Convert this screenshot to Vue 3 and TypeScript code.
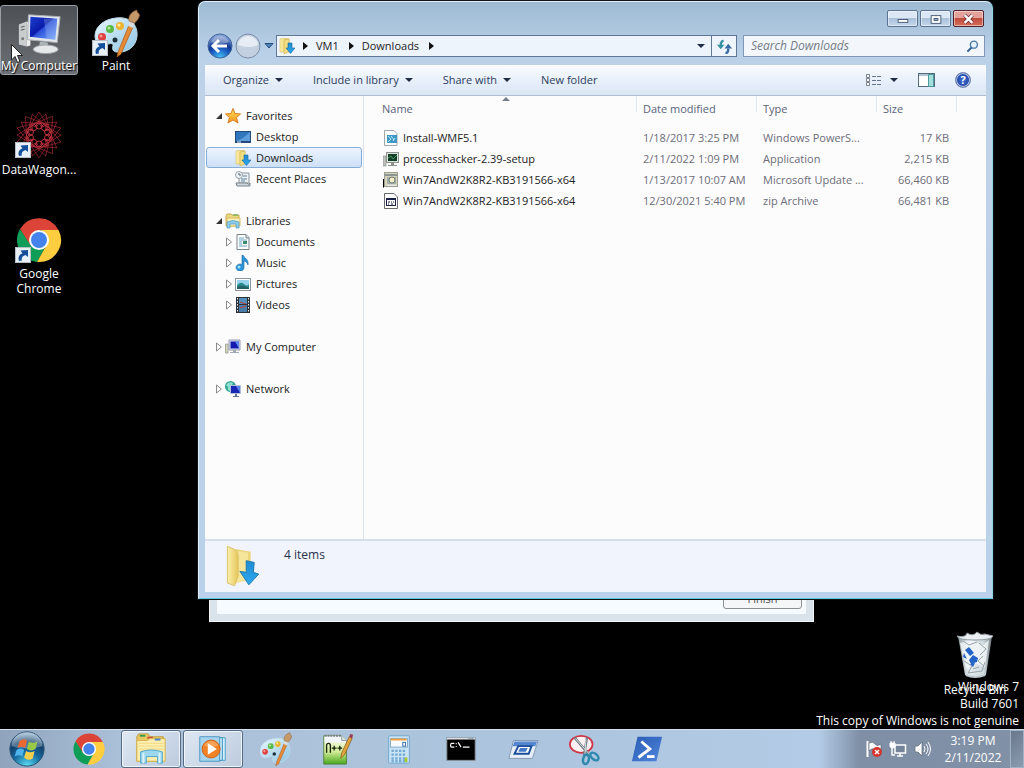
<script setup lang="ts">
import { ref } from 'vue'

interface NavItem {
  label: string
  icon: string
  level: 1 | 2
  arrow: 'open' | 'closed' | 'none'
  selected?: boolean
}

interface FileRow {
  name: string
  icon: string
  modified: string
  type: string
  size: string
}

const navGroups: NavItem[][] = [
  [
    { label: 'Favorites', icon: 'star', level: 1, arrow: 'open' },
    { label: 'Desktop', icon: 'desk', level: 2, arrow: 'none' },
    { label: 'Downloads', icon: 'downloads', level: 2, arrow: 'none', selected: true },
    { label: 'Recent Places', icon: 'recent', level: 2, arrow: 'none' },
  ],
  [
    { label: 'Libraries', icon: 'libraries', level: 1, arrow: 'open' },
    { label: 'Documents', icon: 'document', level: 2, arrow: 'closed' },
    { label: 'Music', icon: 'music', level: 2, arrow: 'closed' },
    { label: 'Pictures', icon: 'picture', level: 2, arrow: 'closed' },
    { label: 'Videos', icon: 'video', level: 2, arrow: 'closed' },
  ],
  [{ label: 'My Computer', icon: 'pc-small', level: 1, arrow: 'closed' }],
  [{ label: 'Network', icon: 'network', level: 1, arrow: 'closed' }],
]

const files: FileRow[] = [
  { name: 'Install-WMF5.1', icon: 'ps-file', modified: '1/18/2017 3:25 PM', type: 'Windows PowerS...', size: '17 KB' },
  { name: 'processhacker-2.39-setup', icon: 'setup', modified: '2/11/2022 1:09 PM', type: 'Application', size: '2,215 KB' },
  { name: 'Win7AndW2K8R2-KB3191566-x64', icon: 'msu', modified: '1/13/2017 10:07 AM', type: 'Microsoft Update ...', size: '66,460 KB' },
  { name: 'Win7AndW2K8R2-KB3191566-x64', icon: 'zip', modified: '12/30/2021 5:40 PM', type: 'zip Archive', size: '66,481 KB' },
]

const tasks = [
  { label: 'Google Chrome', icon: 'chrome' },
  { label: 'Windows Explorer', icon: 'explorer', open: true },
  { label: 'Windows Media Player', icon: 'media', open: true },
  { label: 'Paint', icon: 'palette' },
  { label: 'Notepad++', icon: 'notepad' },
  { label: 'Calculator', icon: 'calc' },
  { label: 'Command Prompt', icon: 'cmd' },
  { label: 'Run', icon: 'run' },
  { label: 'Snipping Tool', icon: 'snip' },
  { label: 'PowerShell', icon: 'powershell' },
]

const menus = ['Organize', 'Include in library', 'Share with']
const query = ref('')
</script>

<template>
  <div class="desktop">
    <svg class="defs" aria-hidden="true">
      <defs>
        <linearGradient id="g-screen" x1="0" y1="0" x2="1" y2="1">
          <stop offset="0" stop-color="#1c3fd0" /><stop offset=".45" stop-color="#0a1aa8" />
          <stop offset=".5" stop-color="#2c50dc" /><stop offset="1" stop-color="#7fb0f8" />
        </linearGradient>
        <linearGradient id="g-folder" x1="0" y1="0" x2="1" y2="0">
          <stop offset="0" stop-color="#fbf1ac" /><stop offset="1" stop-color="#e6c65a" />
        </linearGradient>
        <linearGradient id="g-arrow" x1="0" y1="0" x2="0" y2="1">
          <stop offset="0" stop-color="#1d8bd2" /><stop offset="1" stop-color="#2fa8f0" />
        </linearGradient>
        <linearGradient id="g-palette" x1="0" y1="0" x2="1" y2="1">
          <stop offset="0" stop-color="#eaf8ff" /><stop offset="1" stop-color="#8cc4e4" />
        </linearGradient>
        <linearGradient id="g-star" x1="0" y1="0" x2="0" y2="1">
          <stop offset="0" stop-color="#ffe45c" /><stop offset="1" stop-color="#f7941e" />
        </linearGradient>
        <linearGradient id="g-green" x1="0" y1="0" x2="0" y2="1">
          <stop offset="0" stop-color="#fbfdf4" /><stop offset=".55" stop-color="#d5ee9c" /><stop offset="1" stop-color="#49a81c" />
        </linearGradient>
        <linearGradient id="g-ps" x1="0" y1="0" x2="1" y2="1">
          <stop offset="0" stop-color="#2a5bb4" /><stop offset="1" stop-color="#4f86dc" />
        </linearGradient>
        <radialGradient id="g-orb" cx=".5" cy="1" r=".95">
          <stop offset="0" stop-color="#5ce0f4" /><stop offset=".45" stop-color="#16699e" />
          <stop offset=".75" stop-color="#123e68" /><stop offset="1" stop-color="#8fb0c8" />
        </radialGradient>
        <radialGradient id="g-back" cx=".5" cy="1" r="1">
          <stop offset="0" stop-color="#48c8f8" /><stop offset=".4" stop-color="#1a5cc0" />
          <stop offset=".6" stop-color="#123a94" /><stop offset="1" stop-color="#9cb8e4" />
        </radialGradient>
        <linearGradient id="g-bin" x1="0" y1="0" x2="1" y2="0">
          <stop offset="0" stop-color="#8c979c" /><stop offset=".3" stop-color="#e6edf0" />
          <stop offset=".75" stop-color="#cfd9de" /><stop offset="1" stop-color="#6f797e" />
        </linearGradient>
      </defs>

      <symbol id="i-shortcut" viewBox="0 0 16 16">
        <rect x=".5" y=".5" width="15" height="15" fill="#e9eff6" stroke="#b8bec6" />
        <path d="M4 14C2.500 9.500 5 7 7.500 6.500L5.500 3.500L13 3L13 10L10.500 8C7.500 9 6 11 7 13.500Z" fill="#154f9c" />
      </symbol>

      <symbol id="i-pc" viewBox="0 0 48 48">
        <path d="M3 15L11 12V38L3 36Z" fill="#c9cdce" /><path d="M11 12L15 13V37L11 38Z" fill="#eef0f0" />
        <path d="M5 18L9 17M5 21L9 20" stroke="#53585b" /><circle cx="7" cy="30" r="1.500" fill="#72787b" />
        <path d="M13 5L46 7L43 34L12 31Z" fill="#e3e7ea" stroke="#a8b0b5" />
        <path d="M15 7L43 9L41 31L14.500 28Z" fill="url(#g-screen)" />
        <path d="M29 9L43 9L41 31L32 30Z" fill="#a8c7fa" opacity=".3" />
        <path d="M25 33L33 34L34 39L24 38Z" fill="#aeb6ba" />
        <ellipse cx="31" cy="41" rx="13" ry="4.500" fill="#e4e8ea" stroke="#9aa1a5" />
      </symbol>

      <symbol id="i-palette" viewBox="0 0 48 48">
        <path d="M24 9C38 7 46 16 45 27C44 38 35 44 25 43C21 43 20 40 21 37C22 34 18 34 14 36C8 38 3 34 3 27C3 17 13 10 24 9Z" fill="url(#g-palette)" stroke="#bcdcea" />
        <circle cx="10" cy="28" r="4" fill="#df4141" /><circle cx="9" cy="27" r="1.500" fill="#ff9c8e" />
        <circle cx="18" cy="20" r="4" fill="#5cb948" /><circle cx="17" cy="19" r="1.500" fill="#b1ec90" />
        <circle cx="28" cy="17" r="4" fill="#edb432" /><circle cx="27" cy="16" r="1.500" fill="#fff09b" />
        <circle cx="23" cy="31" r="2.500" fill="#20303a" />
        <path d="M37 16L41 18L29 45L25 48L26 43Z" fill="#e68a35" stroke="#a65a1e" stroke-width=".7" />
        <path d="M36 17L38 11L43 13L41 19Z" fill="#d9dde0" />
        <path d="M37 12C36 7 39 3 45 1C44 4 49 4 47 8C46 11 44 13 42 14Z" fill="#c59869" stroke="#8b623d" stroke-width=".7" />
      </symbol>

      <symbol id="i-chrome" viewBox="0 0 48 48">
        <path d="M24 14H43.500A22 22 0 0 0 5 13L15 30Z" fill="#db4437" />
        <path d="M5 13L15.300 29L24 34L31 30L22 46A22 22 0 0 1 5 13Z" fill="#109d58" />
        <path d="M31 30L22 46A22 22 0 0 0 43.500 14H24A10 10 0 0 1 31 30Z" fill="#ffcd40" />
        <circle cx="24" cy="24" r="10" fill="#fff" /><circle cx="24" cy="24" r="8" fill="#4583ec" />
      </symbol>

      <symbol id="i-wagon" viewBox="0 0 48 48">
        <g fill="none" stroke="#b32c38" stroke-width=".8">
          <g v-for="n in 10" :key="n" :transform="`rotate(${n * 36} 24 24)`">
            <path d="M24 1L11 21M24 1L37 21M17 3L31 15M31 3L17 15" opacity=".75" />
            <circle cx="24" cy="15" r="3" stroke="#d63b48" /><path d="M21 17L24 12L27 17" />
          </g>
        </g>
        <circle cx="24" cy="24" r="4" fill="#000" />
      </symbol>

      <symbol id="i-downloads" viewBox="0 0 16 16">
        <path d="M1 1L6 0L10 1V13L5 14L1 14Z" fill="url(#g-folder)" stroke="#d3b24e" stroke-width=".5" />
        <path d="M5 2L10 1V14L5 16Z" fill="#f2dc82" stroke="#c9a848" stroke-width=".5" />
        <path d="M9 5H13V10H16L11.500 15.500L7 10H9Z" fill="url(#g-arrow)" stroke="#16689c" stroke-width=".6" />
      </symbol>

      <symbol id="i-bigfolder" viewBox="0 0 48 48">
        <path d="M15 5L32 8V39L15 43Z" fill="#edd479" /><path d="M12 7L29 9V38L14 44Z" fill="#f6e69b" />
        <path d="M6 2L15 6Q18 8 18 12V35L14 46L6 43Z" fill="url(#g-folder)" stroke="#d9bd64" />
        <path d="M27 18L36 20L35 31L41 33L30 45L20 30L27 31Z" fill="url(#g-arrow)" stroke="#1975ab" />
      </symbol>

      <symbol id="i-star" viewBox="0 0 16 16">
        <path d="M8 .5L10 5.500L15.500 6L11.500 9.500L13 15L8 12L3 15L4.500 9.500L.5 6L6 5.500Z" fill="url(#g-star)" stroke="#dc7c20" />
      </symbol>
      <symbol id="i-desk" viewBox="0 0 16 16">
        <rect x="0" y="2" width="16" height="12" fill="#234c7e" /><rect x="1" y="3" width="14" height="9" fill="#3175bd" />
        <path d="M1 12Q8 10 15 3V12Z" fill="#5c9cdb" /><path d="M2 13H6" stroke="#dcecff" />
      </symbol>
      <symbol id="i-recent" viewBox="0 0 16 16">
        <path d="M4 2H14V12H4Z" fill="#eef2f5" stroke="#8b969e" /><path d="M1 12H12Q14 15 15 12V15H2Z" fill="#cfd6dc" stroke="#7c858c" />
        <path d="M8 5H12M6 8H12M6 10H10" stroke="#5d80a0" /><circle cx="4" cy="4" r="3.500" fill="#edf4f7" stroke="#96a2aa" /><path d="M4 2V4H6" fill="none" stroke="#59656f" />
      </symbol>
      <symbol id="i-libraries" viewBox="0 0 16 16">
        <path d="M1 3L2 1H6L7 2H14V13H1Z" fill="#ecd780" stroke="#c9ad4f" /><path d="M2 5H15V13H2Z" fill="#f9efb8" stroke="#d5bb62" />
        <path d="M8 2H13" stroke="#52a650" /><path d="M2 15V9Q8 6 14 9V15H11V11H5V15Z" fill="#8dcdec" stroke="#529cc3" stroke-width=".7" />
      </symbol>
      <symbol id="i-document" viewBox="0 0 16 16">
        <path d="M2 .5H11L14 3.500V15.500H2Z" fill="#fff" stroke="#79838c" /><path d="M11 .5V4H14" fill="#dfe5e9" stroke="#79838c" />
        <path d="M4 4H9M4 6H12M4 8H7M4 10H7M4 12H12" stroke="#69a2c4" /><path d="M8 7H12V10H8Z" fill="#378c6c" />
      </symbol>
      <symbol id="i-music" viewBox="0 0 16 16">
        <path d="M8 0C9 3 14 4 13 10C12 7 10 6 9 6V12A4 3.500 0 1 1 7 9.500V0Z" fill="#2b93d8" stroke="#1a6aa6" stroke-width=".6" /><circle cx="4" cy="12" r="1.500" fill="#9ee2ff" />
      </symbol>
      <symbol id="i-picture" viewBox="0 0 16 16">
        <rect x=".5" y="2.500" width="15" height="12" fill="#fff" stroke="#8b979d" /><rect x="2" y="4" width="12" height="9" fill="#98d4ed" />
        <path d="M2 9Q6 5 9 8T14 8V13H2Z" fill="#2b8c8e" /><path d="M2 11Q8 8 14 12V13H2Z" fill="#27616a" />
      </symbol>
      <symbol id="i-video" viewBox="0 0 16 16">
        <rect x="1" y="0" width="14" height="16" fill="#2a3138" /><rect x="4" y="1" width="8" height="6" fill="#538fbb" /><rect x="4" y="8" width="8" height="7" fill="#4a7ea8" />
        <path d="M2.500 1V16M13.500 1V16" stroke="#e7edf1" stroke-dasharray="1.500 1.500" /><path d="M5 5L11 7M5 11L11 9" stroke="#b94042" />
      </symbol>
      <symbol id="i-pc-small" viewBox="0 0 16 16">
        <path d="M.5 5H3V14H.5Z" fill="#d8dabf" stroke="#8b8f87" stroke-width=".7" /><path d="M4 1H15V11H4Z" fill="#dde2ef" stroke="#929bb2" /><path d="M5.500 2.500H14V9.500H5.500Z" fill="#151ab0" /><path d="M10 2.500H14V9.500Z" fill="#5e8bee" /><path d="M8 11H11V13H14V14H5V13H8Z" fill="#a5abb2" />
      </symbol>
      <symbol id="i-network" viewBox="0 0 16 16">
        <circle cx="5.500" cy="5.500" r="5.500" fill="#38a894" /><path d="M1 4Q4 0 8 2L6 5L9 8L4 10Q2 8 3 6Z" fill="#8be0d0" />
        <path d="M5.500 4.500H15.500V12.500H5.500Z" fill="#1a27b2" stroke="#b3bfda" /><path d="M11 5L15 5V12Z" fill="#5b83e6" /><path d="M10 13H12V15H14V16H8V15H10Z" fill="#68758f" />
      </symbol>

      <symbol id="i-ps-file" viewBox="0 0 16 16">
        <path d="M1.500 .5H11L14 3.500V15.500H1.500Z" fill="#fff" stroke="#a0a7ac" /><path d="M4 5H14V13H4Z" fill="#3f97c6" /><path d="M5 6L8 9L5 12M10 11L12 8M8 6L11 10" fill="none" stroke="#bfe6fa" />
      </symbol>
      <symbol id="i-setup" viewBox="0 0 16 16">
        <path d="M0 5H3V15H0Z" fill="#bfc4be" stroke="#80867f" stroke-width=".6" /><rect x="3.500" y="1.500" width="12" height="10" fill="#dce2dc" stroke="#8b938c" /><rect x="5" y="3" width="9" height="7" fill="#163f2b" /><path d="M5 7L8 5L10 8L14 4" fill="none" stroke="#3c9a63" /><path d="M8 12H11V14H14V15H5V14H8Z" fill="#8a928b" />
      </symbol>
      <symbol id="i-msu" viewBox="0 0 16 16">
        <rect x="1.500" y=".5" width="13" height="14" fill="#d6d4b9" stroke="#9c9c90" /><path d="M2 3H14" stroke="#8b9490" stroke-width="2" /><rect x="4" y="5" width="9" height="8" fill="#a3aea9" /><circle cx="9" cy="8" r="3" fill="#f2efc6" stroke="#6f7a76" /><path d="M4 13H13" stroke="#fff" /><path d="M.5 7V15.500" fill="none" stroke="#000" />
      </symbol>
      <symbol id="i-zip" viewBox="0 0 16 16">
        <path d="M1.500 .5H11L14.500 4V15.500H1.500Z" fill="#fff" stroke="#6b6b6b" /><rect x="3" y="5" width="10" height="8" fill="#191e47" /><rect x="4" y="7" width="8" height="5" fill="#fff" /><path d="M5 9H7M8 9H9M10 9H11M5 11H6M8 11H10" stroke="#191e47" />
      </symbol>

      <symbol id="i-explorer" viewBox="0 0 36 36">
        <path d="M3 5L5 2H15L17 5H31V31H3Z" fill="#e7c864" stroke="#c19d3c" /><path d="M6 4H12" stroke="#399a48" stroke-width="2" /><path d="M14 6H20" stroke="#cf4d38" stroke-width="2" />
        <path d="M3 9H14L17 7H33V31H3Z" fill="#fbeeae" stroke="#d3b04b" /><path d="M5 12H32M5 15H32M5 18H32" stroke="#f1da84" />
        <path d="M22 8H28" stroke="#4684c9" stroke-width="2" />
        <path d="M7 33V21Q18 17 30 21V33H25V26H13V33Z" fill="#9bd8f0" stroke="#4fa3ca" /><path d="M10 22V33M27 22V33" stroke="#def4fc" stroke-width="2" />
      </symbol>
      <symbol id="i-media" viewBox="0 0 36 36">
        <path d="M10 6H31V30H10Z" fill="#d3effb" stroke="#4a9cc9" /><path d="M7 6H28V30H7Z" fill="#bce4f7" stroke="#3f94c5" /><path d="M4 5H25V31H4Z" fill="#a5d4ef" stroke="#4a95c2" />
        <circle cx="16" cy="18" r="9.500" fill="#f18326" stroke="#ce5f18" /><path d="M8 14Q16 5 24 14L16 17Z" fill="#f9b778" opacity=".6" /><path d="M12.500 12L22 18L12.500 24Z" fill="#fff" />
      </symbol>
      <symbol id="i-notepad" viewBox="0 0 36 36">
        <path d="M4 4H23L28 9V34H4Z" fill="url(#g-green)" stroke="#54823b" /><path d="M5 4H23L28 9V11H5Z" fill="#f3f6f8" /><path d="M5 4H23" stroke="#747c82" stroke-width="2" stroke-dasharray="2 1" /><path d="M23 4V9H28" fill="#dde3e6" stroke="#919a9f" />
        <path d="M7 22V14Q7 12 9 12T11 14V22M12.500 17H17.500M15 14.500V19.500M18.500 17H23.500M21 14.500V19.500" fill="none" stroke="#16230e" stroke-width="1.400" />
        <path d="M31 5L34 7L26 24L22 28L23 22Z" fill="#e2a33f" stroke="#87601f" stroke-width=".8" /><path d="M31 5L32 2L35 3L34 7Z" fill="#9b3850" />
      </symbol>
      <symbol id="i-calc" viewBox="0 0 36 36">
        <rect x="7" y="4" width="22" height="29" rx="1" fill="#c9e3f7" stroke="#6fa4cc" /><rect x="9" y="7" width="18" height="9" fill="#f7fbfd" stroke="#84a8c4" /><path d="M9 8H26" stroke="#f1a044" stroke-width="2" /><rect x="22" y="11" width="3" height="4" fill="none" stroke="#356da6" />
        <path d="M10 20H26M10 24H26M10 28H26M10 31H26" stroke="#74abd6" stroke-width="2.500" stroke-dasharray="2.500 1.500" /><path d="M24 27H27V32H24Z" fill="#a9c937" />
      </symbol>
      <symbol id="i-cmd" viewBox="0 0 36 36">
        <rect x="3" y="6" width="30" height="24" fill="#000" stroke="#8b949e" /><path d="M3 7H33" stroke="#d6dde4" stroke-width="2" /><path d="M26 7H32" stroke="#566b85" stroke-dasharray="1 1" />
        <path d="M11 12H8Q7 12 7 14T8 16H11M13 12V13M13 15V16M15 11L18 16M20 16H27" fill="none" stroke="#fff" stroke-width="1.300" />
      </symbol>
      <symbol id="i-run" viewBox="0 0 36 36">
        <path d="M8 9H34L28 28H3Z" fill="#e6eef7" stroke="#8196b3" /><path d="M9 10H33L31 15H7Z" fill="#5486cf" /><path d="M13 15H27L24 23H9Z" fill="#fff" stroke="#1c4c9c" stroke-width="2" /><path d="M15 17H23L21 21H13Z" fill="#4379c8" />
      </symbol>
      <symbol id="i-snip" viewBox="0 0 36 36">
        <ellipse cx="14" cy="13" rx="12" ry="9" fill="#fbf1f3" stroke="#cf3544" stroke-width="1.800" /><path d="M7 6L24 26M20 6L17 25" stroke="#6d7a82" stroke-width="2.600" /><path d="M8 7L24 25M19 7L18 23" stroke="#dce3e7" />
        <ellipse cx="28" cy="26" rx="3" ry="5" transform="rotate(-50 28 26)" fill="none" stroke="#2e88ae" stroke-width="2.600" /><ellipse cx="19" cy="29" rx="3" ry="5" transform="rotate(12 19 29)" fill="none" stroke="#2e88ae" stroke-width="2.600" />
      </symbol>
      <symbol id="i-powershell" viewBox="0 0 36 36">
        <path d="M8 5H34L28 31H2Z" fill="url(#g-ps)" /><path d="M12 10L21 18L9 27" fill="none" stroke="#fff" stroke-width="3" /><path d="M18 26H26" stroke="#fff" stroke-width="3" />
      </symbol>
    </svg>

    <main class="workspace">
      <a class="shortcut computer" href="#computer"><svg class="big"><use href="#i-pc" /></svg><span>My Computer</span></a>
      <a class="shortcut paint" href="#paint"><svg class="big"><use href="#i-palette" /></svg><svg class="link-mark"><use href="#i-shortcut" /></svg><span>Paint</span></a>
      <a class="shortcut wagon" href="#datawagon"><svg class="big"><use href="#i-wagon" /></svg><svg class="link-mark"><use href="#i-shortcut" /></svg><span>DataWagon...</span></a>
      <a class="shortcut chrome" href="#chrome"><svg class="big"><use href="#i-chrome" /></svg><svg class="link-mark"><use href="#i-shortcut" /></svg><span>Google Chrome</span></a>
      <svg class="cursor" viewBox="0 0 12 20"><path d="M.5 .5V16L4 12.500L6.500 18.500L9 17.500L6.500 11.500H11.500Z" fill="#fff" stroke="#222" /></svg>

      <a class="shortcut bin" href="#recycle">
        <svg class="big" viewBox="0 0 48 48">
          <path d="M7 5H41L35 44Q24 48 14 44Z" fill="url(#g-bin)" />
          <path d="M9 12L20 9L32 14L38 9L34 36L23 32L15 38Z" fill="#f2f6f8" opacity=".8" />
          <path d="M13 30L21 35L17 42L31 40L34 31M28 12L35 18L29 24M12 10L18 14L26 11M32 25L27 30L33 35M22 38L28 36" fill="none" stroke="#98a5ac" />
          <path d="M6 5Q15 7 16 2Q22 6 26 1Q30 5 34 3L42 5Q41 9 24 9T6 5Z" fill="#e8eef1" stroke="#8f9ba1" />
          <path d="M14 19L18 16L23 22L19 25ZM18 29L22 24L27 27L26 31L20 33ZM13 22L16 28L12 26ZM19 33L24 32L22 36Z" fill="#2464c8" />
          <path d="M15 44Q24 48 34 44" fill="none" stroke="#c3ccd0" stroke-width="2" />
        </svg>
        <span>Recycle Bin</span>
      </a>
      <div class="watermark"><p>Windows 7</p><p>Build 7601</p><p>This copy of Windows is not genuine</p></div>

      <section class="dialog" aria-label="Setup"><div class="dialog-body"><button type="button">Finish</button></div></section>

      <section class="window" aria-label="Downloads">
        <header class="titlebar">
          <button type="button" aria-label="Minimize"><svg viewBox="0 0 30 16"><rect x="10.500" y="8.500" width="10" height="3" fill="#fff" stroke="#4c5d78" /></svg></button>
          <button type="button" aria-label="Maximize"><svg viewBox="0 0 30 16"><rect x="10.500" y="4.500" width="10" height="8" fill="#fff" stroke="#4c5d78" /><rect x="13.500" y="7.500" width="4" height="2" fill="#9cb5d2" stroke="#4c5d78" /></svg></button>
          <button type="button" class="close" aria-label="Close"><svg viewBox="0 0 30 16"><path d="M11 4L19 12M19 4L11 12" stroke="#6b3138" stroke-width="4" /><path d="M11 4L19 12M19 4L11 12" stroke="#fff" stroke-width="2.400" /></svg></button>
        </header>

        <div class="navbar">
          <div class="history">
            <button type="button" aria-label="Back"><svg viewBox="0 0 26 26"><circle cx="13" cy="13" r="12" fill="url(#g-back)" stroke="#41639c" /><path d="M4 9A10 10 0 0 1 22 9Q13 13 4 9Z" fill="#fff" opacity=".35" /><path d="M6 13H20M12 7L6 13L12 19" fill="none" stroke="#fff" stroke-width="3" /></svg></button>
            <button type="button" aria-label="Forward"><svg viewBox="0 0 26 26"><circle cx="13" cy="13" r="12" fill="#c3d0e0" stroke="#7b8ca8" /><path d="M3 12A10 9 0 0 1 23 12Q13 16 3 12Z" fill="#e6edf5" /></svg></button>
            <button type="button" class="recent" aria-label="Recent pages"><svg viewBox="0 0 10 8"><path d="M1 1.500H9L5 6Z" fill="#4e86b8" stroke="#244c7c" /></svg></button>
          </div>
          <div class="address">
            <svg class="small"><use href="#i-downloads" /></svg>
            <i class="tri"></i><a href="#vm1">VM1</a><i class="tri"></i><a href="#downloads">Downloads</a><i class="tri"></i>
            <button type="button" class="drop" aria-label="Previous locations"><i class="down"></i></button>
            <button type="button" class="refresh" aria-label="Refresh"><svg viewBox="0 0 16 16"><path d="M7 2Q4 2 4 7" fill="none" stroke="#3690a4" stroke-width="2.500" /><path d="M0 6H8L4 11Z" fill="#3690a4" /><path d="M9 15Q12 15 12 10" fill="none" stroke="#376ba5" stroke-width="2.500" /><path d="M8 10H16L12 5Z" fill="#376ba5" /></svg></button>
          </div>
          <label class="search">
            <input v-model="query" type="text" aria-label="Search Downloads" placeholder="Search Downloads" />
            <svg viewBox="0 0 14 14"><circle cx="8.500" cy="5" r="3.800" fill="#e5f2fd" stroke="#4878a8" stroke-width="1.500" /><path d="M6 8L1.500 12.500" stroke="#385f91" stroke-width="2.200" /></svg>
          </label>
        </div>

        <div class="client">
          <div class="toolbar">
            <button v-for="m in menus" :key="m" type="button">{{ m }}<i class="down"></i></button>
            <button type="button">New folder</button>
            <div class="tools">
              <button type="button" aria-label="Change your view"><svg viewBox="0 0 17 14"><path d="M1.500 1.500H4.500V4.500H1.500ZM1.500 5.500H4.500V8.500H1.500ZM1.500 9.500H4.500V12.500H1.500Z" fill="#fff" stroke="#78818d" /><path d="M7 3.500H16M7 7.500H16M7 11.500H16" stroke="#65758c" stroke-dasharray="4 1" /></svg><i class="down"></i></button>
              <button type="button" aria-label="Show the preview pane"><svg viewBox="0 0 17 14"><rect x=".5" y=".5" width="16" height="13" fill="#fff" stroke="#516b83" /><path d="M1 2H16" stroke="#b4c6d2" stroke-width="2" /><rect x="10.500" y="1.500" width="5" height="12" fill="#a3dfdd" stroke="#4f9a9d" /></svg></button>
              <button type="button" class="help" aria-label="Get help">?</button>
            </div>
          </div>

          <div class="panes">
            <nav class="tree">
              <ul v-for="(group, g) in navGroups" :key="g">
                <li v-for="item in group" :key="item.label">
                  <a :href="'#' + item.icon" :class="['node', 'level-' + item.level, { selected: item.selected }]">
                    <svg class="twisty" viewBox="0 0 8 10">
                      <path v-if="item.arrow === 'open'" d="M7 2V8H1Z" fill="#333" />
                      <path v-if="item.arrow === 'closed'" d="M1.500 1L6.500 5L1.500 9Z" fill="#fff" stroke="#8a8a8a" />
                    </svg>
                    <svg class="small"><use :href="'#i-' + item.icon" /></svg>
                    <span>{{ item.label }}</span>
                  </a>
                </li>
              </ul>
            </nav>
            <div class="files">
              <table>
                <colgroup><col class="c-name" /><col class="c-date" /><col class="c-type" /><col class="c-size" /><col /></colgroup>
                <thead><tr><th class="sorted">Name<svg viewBox="0 0 8 5"><path d="M0 4L4 0L8 4Z" fill="#71808c" /></svg></th><th>Date modified</th><th>Type</th><th>Size</th><td></td></tr></thead>
                <tbody>
                  <tr v-for="(f, n) in files" :key="n">
                    <td><span class="file"><svg class="small"><use :href="'#i-' + f.icon" /></svg>{{ f.name }}</span></td>
                    <td>{{ f.modified }}</td><td>{{ f.type }}</td><td>{{ f.size }}</td><td></td>
                  </tr>
                </tbody>
              </table>
            </div>
          </div>

          <footer class="details"><svg><use href="#i-bigfolder" /></svg><span>4 items</span></footer>
        </div>
      </section>
    </main>

    <footer class="taskbar">
      <button type="button" class="start" aria-label="Start">
        <svg viewBox="0 0 40 40">
          <circle cx="20" cy="20" r="18" fill="url(#g-orb)" stroke="#24506f" />
          <path d="M4 17A16 15 0 0 1 36 17Q20 22 4 17Z" fill="#fff" opacity=".28" />
          <path d="M12 12Q16 8 20 11L18 19Q14 16 10 19Z" fill="#ee6832" /><path d="M22 12Q26 15 31 12L29 20Q24 23 20 20Z" fill="#9aca45" />
          <path d="M9 21Q13 18 17 21L15 28Q12 25 7 28Z" fill="#4fb3ec" /><path d="M19 22Q23 25 28 22L26 30Q21 33 17 29Z" fill="#fcd04c" />
        </svg>
      </button>
      <div class="tasks">
        <button v-for="t in tasks" :key="t.label" type="button" :class="{ open: t.open }" :aria-label="t.label"><svg><use :href="'#i-' + t.icon" /></svg></button>
      </div>
      <div class="tray">
        <button type="button" aria-label="Action Center"><svg viewBox="0 0 18 18"><path d="M2.500 1V17" stroke="#fff" stroke-width="2" /><path d="M4 3Q8 1 10 4T16 4V11Q12 13 10 10T4 11Z" fill="#fff" stroke="#4d5c70" stroke-width=".6" /><circle cx="12" cy="12" r="5" fill="#d5342c" /><path d="M10 10L14 14M14 10L10 14" stroke="#fff" stroke-width="1.500" /></svg></button>
        <button type="button" aria-label="Network"><svg viewBox="0 0 18 18"><path d="M6 5H16.500V13H6Z" fill="#73839a" stroke="#fff" stroke-width="1.500" /><path d="M11 13V16M8 16H14M3 8V15H6" fill="none" stroke="#fff" stroke-width="1.500" /><path d="M1 3H6V6Q6 8 3.500 8T1 6ZM2 1V3M5 1V3" fill="#fff" stroke="#fff" /></svg></button>
        <button type="button" aria-label="Volume"><svg viewBox="0 0 18 18"><path d="M2 6H5L9 2V16L5 12H2Z" fill="#fff" stroke="#596779" stroke-width=".7" /><path d="M11 6Q13 9 11 12M13 4Q17 9 13 14M15 2Q20 9 15 16" fill="none" stroke="#fff" /></svg></button>
      </div>
      <time class="clock"><span>3:19 PM</span><span>2/11/2022</span></time>
      <button type="button" class="peek" aria-label="Show desktop"></button>
    </footer>
  </div>
</template>

<style>
html, body { height: 100%; background: #000; }
#app { height: 100%; }
</style>

<style scoped>
* { box-sizing: border-box; }
.desktop { display: flex; flex-direction: column; min-height: 100vh; background: #000; font-family: "Open Sans", "Noto Sans", sans-serif; font-size: 12px; line-height: 16px; color: #222; overflow: hidden; }
.defs { position: absolute; width: 0; height: 0; }
.workspace { position: relative; flex: 1; }
button { font: inherit; color: inherit; border: 0; padding: 0; margin: 0; background: none; display: flex; align-items: center; justify-content: center; }
a { color: inherit; text-decoration: none; }
p, ul { margin: 0; padding: 0; }
li { list-style: none; }
svg { display: block; flex: none; }
.small { width: 16px; height: 16px; }

/* desktop icons */
.shortcut { position: absolute; width: 78px; padding-top: 3px; display: flex; flex-direction: column; align-items: center; color: #fff; text-align: center; line-height: 15px; text-shadow: 1px 1px 1px #000; }
.shortcut .big { width: 48px; height: 48px; }
.shortcut span { padding-top: 1px; }
.computer { left: 0; top: 5px; height: 70px; border: 1px solid #9a9fa6; border-radius: 3px; background: linear-gradient(#4c5055, #6d7176); white-space: nowrap; }
.computer .big { width: 46px; height: 48px; }
.paint { left: 77px; top: 6px; }
.wagon { left: 0; top: 108px; }
.wagon span { padding-top: 3px; }
.chrome { left: 0; top: 213px; }
.chrome span { padding-top: 2px; }
.bin { left: auto; right: 10px; top: 628px; }
.bin span { padding-top: 3px; }
.link-mark { position: absolute; left: 15px; top: 34px; width: 16px; height: 16px; }
.cursor { position: absolute; left: 11px; top: 44px; width: 12px; height: 20px; }
.watermark { position: absolute; right: 5px; bottom: 0; color: #fff; text-align: right; line-height: 17px; }

/* window at the back */
.dialog { position: absolute; left: 209px; right: 210px; top: 400px; height: 222px; padding: 7px; background: #dbe3ea; border: 1px solid #eef4f8; display: flex; }
.dialog-body { flex: 1; background: #f6fbff; display: flex; justify-content: flex-end; align-items: flex-end; padding: 5px 4px; }
.dialog button { width: 79px; height: 20px; border: 1px solid #8b8f94; border-radius: 3px; background: #f5f6f8; font-size: 11px; color: #555; }

/* explorer window */
.window { position: absolute; left: 198px; right: 31px; top: 1px; height: 598px; display: flex; flex-direction: column; padding: 0 6px 6px; border: 1px solid #dff0fa; border-right-color: #8fd2e4; border-bottom-color: #61c4dd; border-radius: 7px 7px 0 0; background: linear-gradient(#9ebad3 0, #b9d1e8 50px, #bfd2e8 100px, #b9d1ea 100%); box-shadow: 0 0 0 1px #101318; font-size: 11px; }
.titlebar { display: flex; justify-content: flex-end; gap: 2px; padding: 8px 2px 0 0; }
.titlebar button { width: 31px; height: 17px; border: 1px solid #5c7393; border-radius: 2px; background: linear-gradient(#dbe7f4 0 45%, #abc1d9 50%, #c4d8ec); box-shadow: inset 0 0 0 1px #ffffff77; }
.titlebar svg { width: 29px; height: 16px; }
.titlebar .close { border-color: #54202a; background: linear-gradient(#e3a299 0 45%, #c04a3b 50%, #d66f5c); }
.navbar { display: flex; align-items: center; height: 38px; padding-right: 1px; }
.history { display: flex; align-items: center; width: 71px; padding-left: 2px; gap: 2px; }
.history button svg { width: 26px; height: 26px; }
.history .recent svg { width: 10px; height: 8px; }
.history .recent { padding-left: 1px; }
.address { flex: 1; display: flex; align-items: center; gap: 8px; height: 22px; padding-left: 2px; border: 1px solid #5f7898; background: #eef4fb; color: #222; }
.address a { padding-right: 2px; }
.tri { border: 4px solid transparent; border-left: 5px solid #111; border-right: 0; }
.down { border: 4px solid transparent; border-top: 4px solid #1f2c43; border-bottom: 0; }
.drop { margin-left: auto; width: 20px; height: 20px; margin-right: -8px; }
.refresh { width: 25px; height: 20px; border-left: 1px solid #5f7898; }
.refresh svg { width: 15px; height: 15px; }
.search { width: 242px; height: 22px; margin-left: 6px; display: flex; align-items: center; padding: 0 5px 0 7px; border: 1px solid #8096b4; background: #f3f7fc; font-size: 12px; }
.search input { flex: 1; min-width: 0; border: 0; outline: 0; padding: 0; background: none; font: inherit; color: #222; }
.search input::placeholder { color: #757c86; font-style: italic; opacity: 1; }
.search svg { width: 13px; height: 13px; }

.client { flex: 1; display: flex; flex-direction: column; background: #fff; }
.toolbar { display: flex; align-items: center; gap: 30px; height: 31px; padding: 0 15px 0 18px; border-bottom: 1px solid #aebdd2; background: linear-gradient(#fbfdff, #e8f0fb 50%, #dae6f4); color: #2c3c5c; }
.toolbar button { gap: 6px; }
.tools { margin-left: auto; display: flex; align-items: center; gap: 20px; }
.tools button { gap: 8px; }
.tools svg { width: 17px; height: 14px; }
.toolbar .help { width: 16px; height: 16px; border: 1px solid #7485ae; border-radius: 50%; background: radial-gradient(#3c6ed6, #16338e); color: #fff; font-weight: bold; box-shadow: inset 0 0 0 1px #b8c8ea; }

.panes { flex: 1; display: flex; min-height: 0; background: #fcfcfd; }
.tree { width: 159px; padding-top: 9px; border-right: 1px solid #dbe3f0; }
.tree ul { padding-bottom: 21px; }
.node { display: flex; align-items: center; height: 21px; margin: 0 1px; padding-left: 8px; border: 1px solid transparent; border-radius: 3px; }
.node.level-2 { padding-left: 18px; }
.node.selected { border-color: #84acdd; background: linear-gradient(#edf4fd, #cde0f7); }
.twisty { width: 8px; height: 10px; margin-right: 2px; }
.node span { padding-left: 5px; white-space: nowrap; }

.files { flex: 1; }
table { width: 100%; border-collapse: collapse; table-layout: fixed; color: #6d6d78; }
.c-name { width: 273px; }
.c-date, .c-type { width: 120px; }
.c-size { width: 80px; }
th { position: relative; height: 31px; padding: 5px 6px 0; font-weight: normal; text-align: left; vertical-align: top; color: #5a6478; background: linear-gradient(#e2e8ef, #e2e8ef) right top / 1px 16px no-repeat; }
th:first-child { padding-left: 18px; }
.sorted svg { position: absolute; left: 138px; top: 1px; width: 8px; height: 5px; }
tbody td { height: 21px; padding: 0 6px; white-space: nowrap; }
tbody td:first-child { padding-left: 19px; color: #222; }
tbody td:nth-child(4) { text-align: right; padding-right: 8px; }
.file { display: flex; align-items: center; gap: 4px; }

.details { display: flex; align-items: flex-start; gap: 19px; height: 53px; padding: 3px 17px 0; border-top: 2px solid #d6dee9; background: #f1f4fd; color: #29334c; font-size: 12px; }
.details svg { width: 43px; height: 44px; }
.details span { padding-top: 3px; }

/* taskbar */
.taskbar { display: flex; height: 39px; border-top: 1px solid #d3dfec; background: linear-gradient(90deg, #8fa3bd 0, #abc0d9 12%, #adc5de 55%, #b3cbe6 80%, #7e8fa6 84%, #8191a6 100%); color: #fff; }
.start { width: 53px; margin-right: 6px; }
.start svg { width: 40px; height: 38px; }
.tasks { flex: 1; display: flex; gap: 2px; }
.tasks button { width: 60px; border: 1px solid transparent; border-radius: 3px; }
.tasks svg { width: 34px; height: 34px; }
.tasks .open { border-color: #566a84; background: linear-gradient(135deg, #dfe8f2, #bccbdf); box-shadow: inset 0 0 0 1px #eff5fb; }
.tray { display: flex; align-items: center; gap: 6px; }
.tray svg { width: 18px; height: 18px; }
.clock { width: 79px; display: flex; flex-direction: column; justify-content: center; text-align: center; line-height: 17px; padding-left: 5px; }
.peek { width: 14px; border: 1px solid #a3b1c2; background: linear-gradient(135deg, #68778c, #8b9bb0); }
</style>
